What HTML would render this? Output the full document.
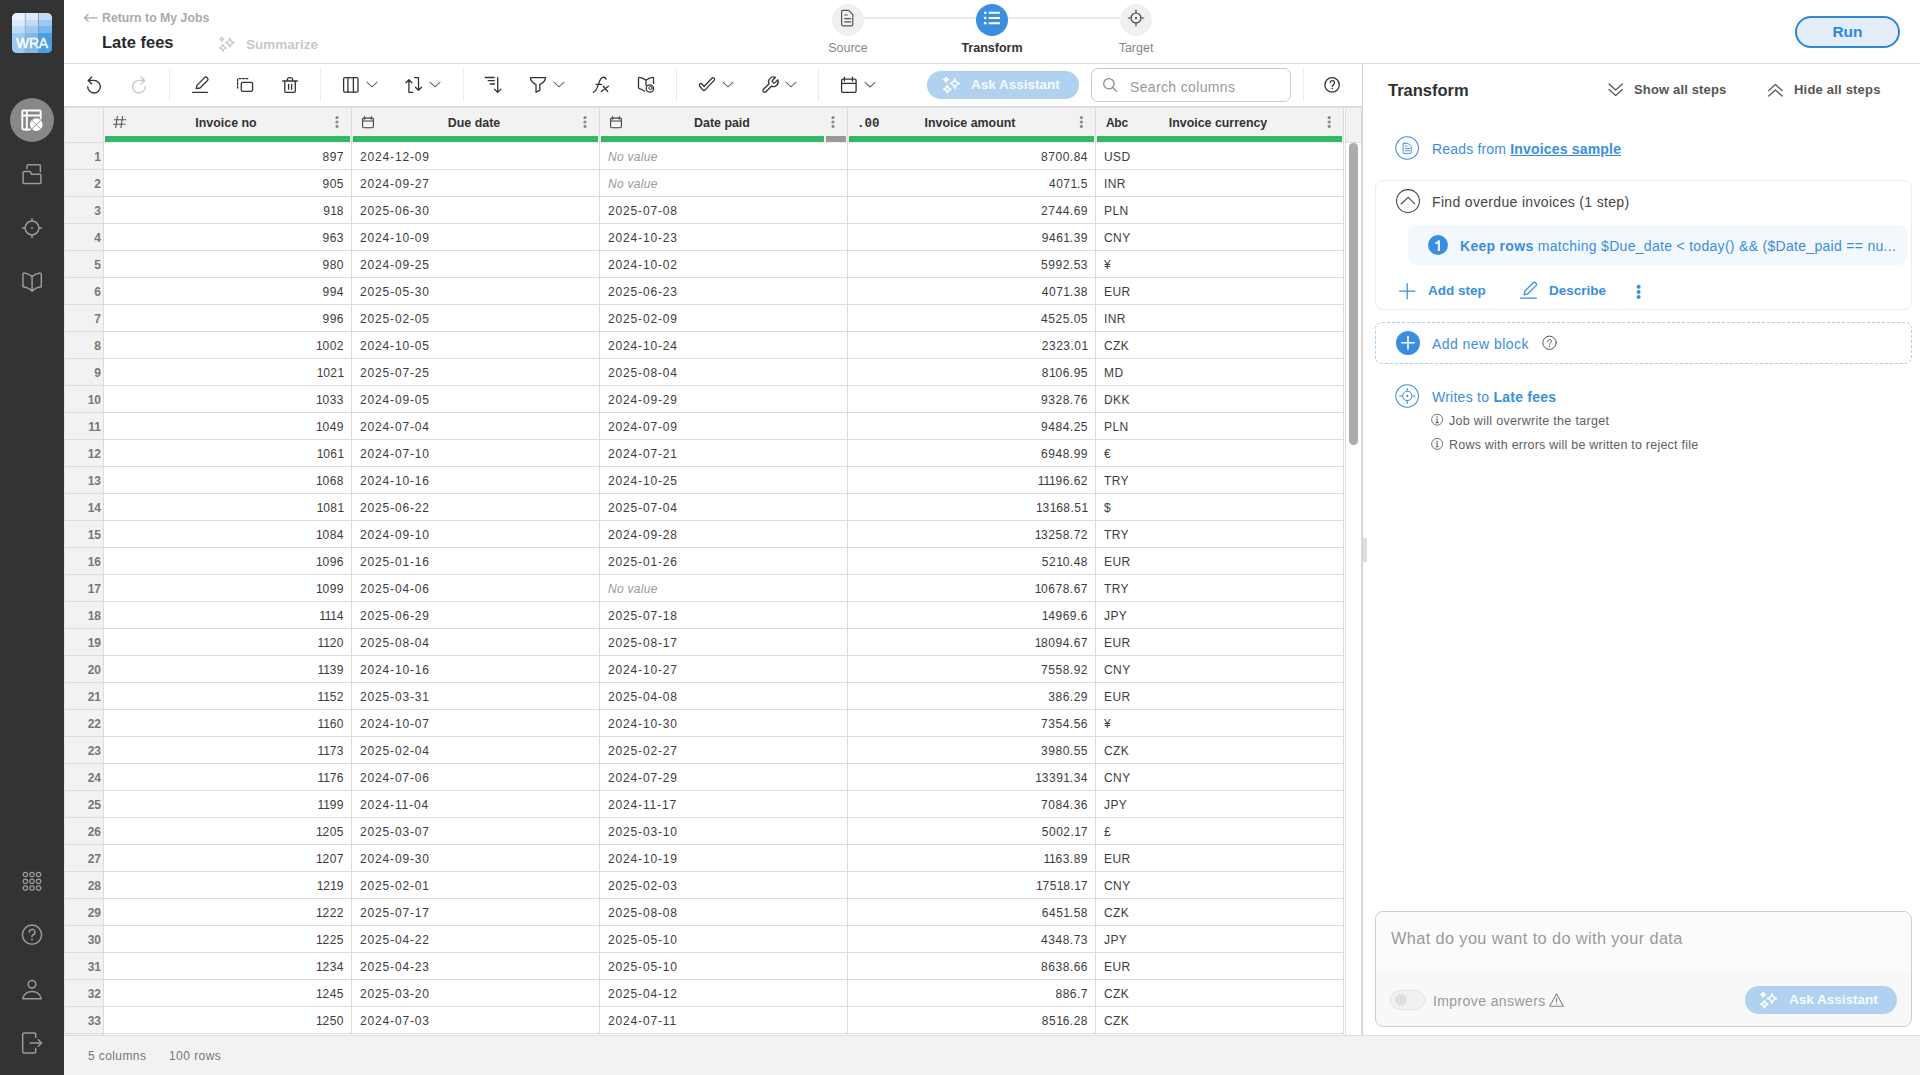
<!DOCTYPE html>
<html><head><meta charset="utf-8">
<style>
*{box-sizing:border-box;margin:0;padding:0}
html,body{width:1920px;height:1075px;overflow:hidden;background:#fff;font-family:"Liberation Sans",sans-serif;color:#333}
.abs{position:absolute}
svg{position:absolute;overflow:visible}
#side{position:absolute;left:0;top:0;width:64px;height:1075px;background:#333}
#hdr{position:absolute;left:64px;top:0;width:1856px;height:64px;background:#fff;border-bottom:1px solid #dcdcdc}
#tb{position:absolute;left:64px;top:64px;width:1298px;height:42px;background:#fff}
.sep{position:absolute;top:69px;width:1px;height:32px;background:#ebebeb}
#tbl{position:absolute;left:64px;top:106px;width:1298px;height:929px;background:#fff;border-top:2px solid #dcdcdc;overflow:hidden}
.rn{position:absolute;left:64px;width:40px;height:27px;background:#f2f2f2;border-right:1px solid #dcdcdc;border-bottom:1px solid #dcdcdc;border-left:1px solid #e4e4e4}
.rn span{position:absolute;right:2px;top:0;line-height:29px;font-size:12px;font-weight:bold;color:#777}
.c{position:absolute;width:248px;height:27px;border-right:1px solid #dcdcdc;border-bottom:1px solid #dcdcdc;line-height:29px;font-size:12px;color:#3c3c3c;white-space:nowrap;letter-spacing:0.85px}
.num{text-align:right;padding-right:7px;letter-spacing:0.5px}
.o{font-style:normal;letter-spacing:-0.2px}
.txt{padding-left:8px}
.nv{font-style:italic;color:#999;letter-spacing:0.3px}
.cur{letter-spacing:0.4px}
.hc{position:absolute;top:108px;height:35px;background:#f2f2f2;border-right:1px solid #dcdcdc}
.hc .t{position:absolute;left:-3px;right:0;top:1px;line-height:28px;text-align:center;font-size:12.4px;font-weight:bold;color:#333;letter-spacing:0px}
.hc .g{position:absolute;top:28px;height:6px;background:#35b865}
.kb{position:absolute;top:10px;width:3px}
.kb i{display:block;width:3px;height:3px;border-radius:50%;background:#8a8a8a;margin-bottom:1.5px}
#rp{position:absolute;left:1362px;top:64px;width:558px;height:971px;background:#fff;border-left:1px solid #d2d2d2}
#foot{position:absolute;left:64px;top:1035px;width:1856px;height:40px;background:#f2f2f2;border-top:1px solid #dcdcdc}
.blue{color:#3a8ee0}
</style></head><body>

<!-- SIDEBAR -->
<div id="side"></div>
<div class="abs" style="left:12px;top:13px;width:40px;height:40px;border-radius:5px;overflow:hidden;background:#8fc2ee">
  <svg width="40" height="40" style="left:0;top:0">
    <rect x="0" y="0" width="13" height="7" fill="#eaf3fc"/><rect x="13" y="0" width="13" height="7" fill="#dcebf9"/><rect x="26" y="0" width="14" height="7" fill="#bfdcf5"/>
    <rect x="0" y="7" width="13" height="6" fill="#dcebf9"/><rect x="13" y="7" width="13" height="6" fill="#bfdcf5"/><rect x="26" y="7" width="14" height="6" fill="#9ccaf0"/>
    <rect x="0" y="13" width="13" height="7" fill="#bfdcf5"/><rect x="13" y="13" width="13" height="7" fill="#9ccaf0"/><rect x="26" y="13" width="14" height="7" fill="#7cb8ea"/>
    <rect x="0" y="20" width="13" height="20" fill="#9ccaf0"/><rect x="13" y="20" width="13" height="20" fill="#7cb8ea"/><rect x="26" y="20" width="14" height="20" fill="#4a9fe2"/>
    <line x1="13.3" y1="0" x2="13.3" y2="40" stroke="#8ea3b6" stroke-width="0.9" opacity="0.85"/>
    <line x1="26.5" y1="0" x2="26.5" y2="40" stroke="#7d93a8" stroke-width="0.9" opacity="0.85"/>
    <text x="19.9" y="35.2" text-anchor="middle" font-family="Liberation Sans" font-size="13.9" fill="#fff" stroke="#fff" stroke-width="0.35" letter-spacing="-0.2">WRA</text>
  </svg>
</div>
<div class="abs" style="left:10px;top:98px;width:44px;height:44px;border-radius:50%;background:#878787"></div>

<!-- HEADER -->
<div id="hdr"></div>
<div class="abs" style="left:102px;top:10px;font-size:12.3px;font-weight:bold;color:#aaa;line-height:16px">Return to My Jobs</div>
<div class="abs" style="left:102px;top:32px;font-size:16.5px;font-weight:bold;color:#2a2a2a;line-height:20px">Late fees</div>
<div class="abs" style="left:246px;top:37px;font-size:13.5px;font-weight:bold;color:#c8c8c8;line-height:16px">Summarize</div>

<!-- stepper -->
<div class="abs" style="left:864px;top:17px;width:112px;height:2px;background:#ebebeb"></div>
<div class="abs" style="left:1008px;top:17px;width:112px;height:2px;background:#ebebeb"></div>
<div class="abs" style="left:832px;top:4px;width:32px;height:32px;border-radius:50%;background:#f0f0f0"></div>
<div class="abs" style="left:976px;top:4px;width:32px;height:32px;border-radius:50%;background:#3b8fdf"></div>
<div class="abs" style="left:1120px;top:4px;width:32px;height:32px;border-radius:50%;background:#f0f0f0"></div>
<div class="abs" style="left:798px;top:40px;width:100px;text-align:center;font-size:12.5px;color:#888;line-height:16px">Source</div>
<div class="abs" style="left:942px;top:40px;width:100px;text-align:center;font-size:12.5px;font-weight:bold;color:#333;line-height:16px">Transform</div>
<div class="abs" style="left:1086px;top:40px;width:100px;text-align:center;font-size:12.5px;color:#888;line-height:16px">Target</div>

<div class="abs" style="left:1795px;top:16px;width:105px;height:32px;border-radius:16px;border:2px solid #2e86d9;background:#e3eefa;text-align:center;line-height:28px;font-size:15.5px;font-weight:bold;color:#2e86d9">Run</div>

<!-- TOOLBAR -->
<div id="tb"></div>
<div class="sep" style="left:169px"></div>
<div class="sep" style="left:320px"></div>
<div class="sep" style="left:463px"></div>
<div class="sep" style="left:676px"></div>
<div class="sep" style="left:818px"></div>
<div class="sep" style="left:1303px"></div>
<div class="abs" style="left:927px;top:71px;width:152px;height:28px;border-radius:14px;background:#b0d1f0"></div>
<div class="abs" style="left:971px;top:77px;font-size:13.5px;font-weight:bold;color:#f7fafd;line-height:16px">Ask Assistant</div>
<div class="abs" style="left:1091px;top:68px;width:200px;height:34px;border:1px solid #c8c8c8;border-radius:7px;background:#fff"></div>
<div class="abs" style="left:1130px;top:79px;font-size:14px;letter-spacing:0.35px;color:#999;line-height:16px">Search columns</div>

<!-- TABLE -->
<div id="tbl"></div>
<div class="abs" style="left:64px;top:108px;width:40px;height:35px;background:#f2f2f2;border-right:1px solid #dcdcdc;border-bottom:1px solid #dcdcdc;border-left:1px solid #e4e4e4"></div>
<div class="hc" style="left:104px;width:248px">
  <div class="t">Invoice no</div>
  <div class="g" style="left:1px;width:245px"></div>
</div>
<div class="hc" style="left:352px;width:248px">
  <div class="t">Due date</div>
  <div class="g" style="left:1px;width:245px"></div>
</div>
<div class="hc" style="left:600px;width:248px">
  <div class="t">Date paid</div>
  <div class="g" style="left:1px;width:223px"></div>
  <div class="g" style="left:226px;width:20px;background:#999"></div>
</div>
<div class="hc" style="left:848px;width:248px">
  <div class="abs" style="left:9px;top:8px;font-family:'Liberation Mono',monospace;font-size:12.5px;font-weight:bold;color:#333;line-height:16px;letter-spacing:0px">.00</div>
  <div class="t">Invoice amount</div>
  <div class="g" style="left:1px;width:245px"></div>
</div>
<div class="hc" style="left:1096px;width:248px">
  <div class="abs" style="left:10px;top:7px;font-size:12px;letter-spacing:-0.3px;font-weight:bold;color:#333;line-height:16px">Abc</div>
  <div class="t">Invoice currency</div>
  <div class="g" style="left:1px;width:245px"></div>
</div>
<div class="rn" style="top:143px"><span>1</span></div>
<div class="c num" style="top:143px;left:104px">897</div>
<div class="c txt" style="top:143px;left:352px">2024-12-09</div>
<div class="c txt nv" style="top:143px;left:600px">No value</div>
<div class="c num" style="top:143px;left:848px">8700.84</div>
<div class="c txt cur" style="top:143px;left:1096px">USD</div>
<div class="rn" style="top:170px"><span>2</span></div>
<div class="c num" style="top:170px;left:104px">905</div>
<div class="c txt" style="top:170px;left:352px">2024-09-27</div>
<div class="c txt nv" style="top:170px;left:600px">No value</div>
<div class="c num" style="top:170px;left:848px">407<i class=o>1</i>.5</div>
<div class="c txt cur" style="top:170px;left:1096px">INR</div>
<div class="rn" style="top:197px"><span>3</span></div>
<div class="c num" style="top:197px;left:104px">9<i class=o>1</i>8</div>
<div class="c txt" style="top:197px;left:352px">2025-06-30</div>
<div class="c txt" style="top:197px;left:600px">2025-07-08</div>
<div class="c num" style="top:197px;left:848px">2744.69</div>
<div class="c txt cur" style="top:197px;left:1096px">PLN</div>
<div class="rn" style="top:224px"><span>4</span></div>
<div class="c num" style="top:224px;left:104px">963</div>
<div class="c txt" style="top:224px;left:352px">2024-10-09</div>
<div class="c txt" style="top:224px;left:600px">2024-10-23</div>
<div class="c num" style="top:224px;left:848px">946<i class=o>1</i>.39</div>
<div class="c txt cur" style="top:224px;left:1096px">CNY</div>
<div class="rn" style="top:251px"><span>5</span></div>
<div class="c num" style="top:251px;left:104px">980</div>
<div class="c txt" style="top:251px;left:352px">2024-09-25</div>
<div class="c txt" style="top:251px;left:600px">2024-10-02</div>
<div class="c num" style="top:251px;left:848px">5992.53</div>
<div class="c txt cur" style="top:251px;left:1096px">¥</div>
<div class="rn" style="top:278px"><span>6</span></div>
<div class="c num" style="top:278px;left:104px">994</div>
<div class="c txt" style="top:278px;left:352px">2025-05-30</div>
<div class="c txt" style="top:278px;left:600px">2025-06-23</div>
<div class="c num" style="top:278px;left:848px">407<i class=o>1</i>.38</div>
<div class="c txt cur" style="top:278px;left:1096px">EUR</div>
<div class="rn" style="top:305px"><span>7</span></div>
<div class="c num" style="top:305px;left:104px">996</div>
<div class="c txt" style="top:305px;left:352px">2025-02-05</div>
<div class="c txt" style="top:305px;left:600px">2025-02-09</div>
<div class="c num" style="top:305px;left:848px">4525.05</div>
<div class="c txt cur" style="top:305px;left:1096px">INR</div>
<div class="rn" style="top:332px"><span>8</span></div>
<div class="c num" style="top:332px;left:104px"><i class=o>1</i>002</div>
<div class="c txt" style="top:332px;left:352px">2024-10-05</div>
<div class="c txt" style="top:332px;left:600px">2024-10-24</div>
<div class="c num" style="top:332px;left:848px">2323.0<i class=o>1</i></div>
<div class="c txt cur" style="top:332px;left:1096px">CZK</div>
<div class="rn" style="top:359px"><span>9</span></div>
<div class="c num" style="top:359px;left:104px"><i class=o>1</i>02<i class=o>1</i></div>
<div class="c txt" style="top:359px;left:352px">2025-07-25</div>
<div class="c txt" style="top:359px;left:600px">2025-08-04</div>
<div class="c num" style="top:359px;left:848px">8<i class=o>1</i>06.95</div>
<div class="c txt cur" style="top:359px;left:1096px">MD</div>
<div class="rn" style="top:386px"><span>10</span></div>
<div class="c num" style="top:386px;left:104px"><i class=o>1</i>033</div>
<div class="c txt" style="top:386px;left:352px">2024-09-05</div>
<div class="c txt" style="top:386px;left:600px">2024-09-29</div>
<div class="c num" style="top:386px;left:848px">9328.76</div>
<div class="c txt cur" style="top:386px;left:1096px">DKK</div>
<div class="rn" style="top:413px"><span>11</span></div>
<div class="c num" style="top:413px;left:104px"><i class=o>1</i>049</div>
<div class="c txt" style="top:413px;left:352px">2024-07-04</div>
<div class="c txt" style="top:413px;left:600px">2024-07-09</div>
<div class="c num" style="top:413px;left:848px">9484.25</div>
<div class="c txt cur" style="top:413px;left:1096px">PLN</div>
<div class="rn" style="top:440px"><span>12</span></div>
<div class="c num" style="top:440px;left:104px"><i class=o>1</i>06<i class=o>1</i></div>
<div class="c txt" style="top:440px;left:352px">2024-07-10</div>
<div class="c txt" style="top:440px;left:600px">2024-07-21</div>
<div class="c num" style="top:440px;left:848px">6948.99</div>
<div class="c txt cur" style="top:440px;left:1096px">€</div>
<div class="rn" style="top:467px"><span>13</span></div>
<div class="c num" style="top:467px;left:104px"><i class=o>1</i>068</div>
<div class="c txt" style="top:467px;left:352px">2024-10-16</div>
<div class="c txt" style="top:467px;left:600px">2024-10-25</div>
<div class="c num" style="top:467px;left:848px"><i class=o>1</i><i class=o>1</i><i class=o>1</i>96.62</div>
<div class="c txt cur" style="top:467px;left:1096px">TRY</div>
<div class="rn" style="top:494px"><span>14</span></div>
<div class="c num" style="top:494px;left:104px"><i class=o>1</i>08<i class=o>1</i></div>
<div class="c txt" style="top:494px;left:352px">2025-06-22</div>
<div class="c txt" style="top:494px;left:600px">2025-07-04</div>
<div class="c num" style="top:494px;left:848px"><i class=o>1</i>3<i class=o>1</i>68.5<i class=o>1</i></div>
<div class="c txt cur" style="top:494px;left:1096px">$</div>
<div class="rn" style="top:521px"><span>15</span></div>
<div class="c num" style="top:521px;left:104px"><i class=o>1</i>084</div>
<div class="c txt" style="top:521px;left:352px">2024-09-10</div>
<div class="c txt" style="top:521px;left:600px">2024-09-28</div>
<div class="c num" style="top:521px;left:848px"><i class=o>1</i>3258.72</div>
<div class="c txt cur" style="top:521px;left:1096px">TRY</div>
<div class="rn" style="top:548px"><span>16</span></div>
<div class="c num" style="top:548px;left:104px"><i class=o>1</i>096</div>
<div class="c txt" style="top:548px;left:352px">2025-01-16</div>
<div class="c txt" style="top:548px;left:600px">2025-01-26</div>
<div class="c num" style="top:548px;left:848px">52<i class=o>1</i>0.48</div>
<div class="c txt cur" style="top:548px;left:1096px">EUR</div>
<div class="rn" style="top:575px"><span>17</span></div>
<div class="c num" style="top:575px;left:104px"><i class=o>1</i>099</div>
<div class="c txt" style="top:575px;left:352px">2025-04-06</div>
<div class="c txt nv" style="top:575px;left:600px">No value</div>
<div class="c num" style="top:575px;left:848px"><i class=o>1</i>0678.67</div>
<div class="c txt cur" style="top:575px;left:1096px">TRY</div>
<div class="rn" style="top:602px"><span>18</span></div>
<div class="c num" style="top:602px;left:104px"><i class=o>1</i><i class=o>1</i><i class=o>1</i>4</div>
<div class="c txt" style="top:602px;left:352px">2025-06-29</div>
<div class="c txt" style="top:602px;left:600px">2025-07-18</div>
<div class="c num" style="top:602px;left:848px"><i class=o>1</i>4969.6</div>
<div class="c txt cur" style="top:602px;left:1096px">JPY</div>
<div class="rn" style="top:629px"><span>19</span></div>
<div class="c num" style="top:629px;left:104px"><i class=o>1</i><i class=o>1</i>20</div>
<div class="c txt" style="top:629px;left:352px">2025-08-04</div>
<div class="c txt" style="top:629px;left:600px">2025-08-17</div>
<div class="c num" style="top:629px;left:848px"><i class=o>1</i>8094.67</div>
<div class="c txt cur" style="top:629px;left:1096px">EUR</div>
<div class="rn" style="top:656px"><span>20</span></div>
<div class="c num" style="top:656px;left:104px"><i class=o>1</i><i class=o>1</i>39</div>
<div class="c txt" style="top:656px;left:352px">2024-10-16</div>
<div class="c txt" style="top:656px;left:600px">2024-10-27</div>
<div class="c num" style="top:656px;left:848px">7558.92</div>
<div class="c txt cur" style="top:656px;left:1096px">CNY</div>
<div class="rn" style="top:683px"><span>21</span></div>
<div class="c num" style="top:683px;left:104px"><i class=o>1</i><i class=o>1</i>52</div>
<div class="c txt" style="top:683px;left:352px">2025-03-31</div>
<div class="c txt" style="top:683px;left:600px">2025-04-08</div>
<div class="c num" style="top:683px;left:848px">386.29</div>
<div class="c txt cur" style="top:683px;left:1096px">EUR</div>
<div class="rn" style="top:710px"><span>22</span></div>
<div class="c num" style="top:710px;left:104px"><i class=o>1</i><i class=o>1</i>60</div>
<div class="c txt" style="top:710px;left:352px">2024-10-07</div>
<div class="c txt" style="top:710px;left:600px">2024-10-30</div>
<div class="c num" style="top:710px;left:848px">7354.56</div>
<div class="c txt cur" style="top:710px;left:1096px">¥</div>
<div class="rn" style="top:737px"><span>23</span></div>
<div class="c num" style="top:737px;left:104px"><i class=o>1</i><i class=o>1</i>73</div>
<div class="c txt" style="top:737px;left:352px">2025-02-04</div>
<div class="c txt" style="top:737px;left:600px">2025-02-27</div>
<div class="c num" style="top:737px;left:848px">3980.55</div>
<div class="c txt cur" style="top:737px;left:1096px">CZK</div>
<div class="rn" style="top:764px"><span>24</span></div>
<div class="c num" style="top:764px;left:104px"><i class=o>1</i><i class=o>1</i>76</div>
<div class="c txt" style="top:764px;left:352px">2024-07-06</div>
<div class="c txt" style="top:764px;left:600px">2024-07-29</div>
<div class="c num" style="top:764px;left:848px"><i class=o>1</i>339<i class=o>1</i>.34</div>
<div class="c txt cur" style="top:764px;left:1096px">CNY</div>
<div class="rn" style="top:791px"><span>25</span></div>
<div class="c num" style="top:791px;left:104px"><i class=o>1</i><i class=o>1</i>99</div>
<div class="c txt" style="top:791px;left:352px">2024-11-04</div>
<div class="c txt" style="top:791px;left:600px">2024-11-17</div>
<div class="c num" style="top:791px;left:848px">7084.36</div>
<div class="c txt cur" style="top:791px;left:1096px">JPY</div>
<div class="rn" style="top:818px"><span>26</span></div>
<div class="c num" style="top:818px;left:104px"><i class=o>1</i>205</div>
<div class="c txt" style="top:818px;left:352px">2025-03-07</div>
<div class="c txt" style="top:818px;left:600px">2025-03-10</div>
<div class="c num" style="top:818px;left:848px">5002.<i class=o>1</i>7</div>
<div class="c txt cur" style="top:818px;left:1096px">£</div>
<div class="rn" style="top:845px"><span>27</span></div>
<div class="c num" style="top:845px;left:104px"><i class=o>1</i>207</div>
<div class="c txt" style="top:845px;left:352px">2024-09-30</div>
<div class="c txt" style="top:845px;left:600px">2024-10-19</div>
<div class="c num" style="top:845px;left:848px"><i class=o>1</i><i class=o>1</i>63.89</div>
<div class="c txt cur" style="top:845px;left:1096px">EUR</div>
<div class="rn" style="top:872px"><span>28</span></div>
<div class="c num" style="top:872px;left:104px"><i class=o>1</i>2<i class=o>1</i>9</div>
<div class="c txt" style="top:872px;left:352px">2025-02-01</div>
<div class="c txt" style="top:872px;left:600px">2025-02-03</div>
<div class="c num" style="top:872px;left:848px"><i class=o>1</i>75<i class=o>1</i>8.<i class=o>1</i>7</div>
<div class="c txt cur" style="top:872px;left:1096px">CNY</div>
<div class="rn" style="top:899px"><span>29</span></div>
<div class="c num" style="top:899px;left:104px"><i class=o>1</i>222</div>
<div class="c txt" style="top:899px;left:352px">2025-07-17</div>
<div class="c txt" style="top:899px;left:600px">2025-08-08</div>
<div class="c num" style="top:899px;left:848px">645<i class=o>1</i>.58</div>
<div class="c txt cur" style="top:899px;left:1096px">CZK</div>
<div class="rn" style="top:926px"><span>30</span></div>
<div class="c num" style="top:926px;left:104px"><i class=o>1</i>225</div>
<div class="c txt" style="top:926px;left:352px">2025-04-22</div>
<div class="c txt" style="top:926px;left:600px">2025-05-10</div>
<div class="c num" style="top:926px;left:848px">4348.73</div>
<div class="c txt cur" style="top:926px;left:1096px">JPY</div>
<div class="rn" style="top:953px"><span>31</span></div>
<div class="c num" style="top:953px;left:104px"><i class=o>1</i>234</div>
<div class="c txt" style="top:953px;left:352px">2025-04-23</div>
<div class="c txt" style="top:953px;left:600px">2025-05-10</div>
<div class="c num" style="top:953px;left:848px">8638.66</div>
<div class="c txt cur" style="top:953px;left:1096px">EUR</div>
<div class="rn" style="top:980px"><span>32</span></div>
<div class="c num" style="top:980px;left:104px"><i class=o>1</i>245</div>
<div class="c txt" style="top:980px;left:352px">2025-03-20</div>
<div class="c txt" style="top:980px;left:600px">2025-04-12</div>
<div class="c num" style="top:980px;left:848px">886.7</div>
<div class="c txt cur" style="top:980px;left:1096px">CZK</div>
<div class="rn" style="top:1007px"><span>33</span></div>
<div class="c num" style="top:1007px;left:104px"><i class=o>1</i>250</div>
<div class="c txt" style="top:1007px;left:352px">2024-07-03</div>
<div class="c txt" style="top:1007px;left:600px">2024-07-11</div>
<div class="c num" style="top:1007px;left:848px">85<i class=o>1</i>6.28</div>
<div class="c txt cur" style="top:1007px;left:1096px">CZK</div>
<div class="rn" style="top:1034px"></div>
<!-- scroll col -->
<div class="abs" style="left:1345px;top:108px;width:17px;height:927px;background:#fff;border-left:1px solid #dcdcdc;border-right:1px solid #dcdcdc"></div>
<div class="abs" style="left:1346px;top:108px;width:15px;height:35px;background:#f2f2f2;border-bottom:1px solid #dcdcdc"></div>
<div class="abs" style="left:1349px;top:143px;width:9px;height:302px;border-radius:4.5px;background:#acacac"></div>

<!-- RIGHT PANEL -->
<div id="rp"></div>
<div class="abs" style="left:1363px;top:538px;width:4px;height:24px;background:#dedede"></div>
<div class="abs" style="left:1388px;top:80px;font-size:16.5px;font-weight:bold;color:#2f2f2f;line-height:20px">Transform</div>
<div class="abs" style="left:1634px;top:82px;font-size:13px;letter-spacing:0.15px;font-weight:bold;color:#555;line-height:16px">Show all steps</div>
<div class="abs" style="left:1794px;top:82px;font-size:13px;letter-spacing:0.2px;font-weight:bold;color:#555;line-height:16px">Hide all steps</div>
<div class="abs blue" style="left:1432px;top:140px;font-size:14px;letter-spacing:0.18px;line-height:18px">Reads from <b style="text-decoration:underline">Invoices sample</b></div>

<div class="abs" style="left:1375px;top:180px;width:537px;height:130px;border:1px solid #ececec;border-radius:8px"></div>
<div class="abs" style="left:1432px;top:193px;font-size:14px;letter-spacing:0.33px;color:#444;line-height:18px">Find overdue invoices (1 step)</div>
<div class="abs" style="left:1408px;top:225px;width:499px;height:40px;border-radius:8px;background:#f3f8fd"></div>
<div class="abs" style="left:1428px;top:235px;width:20px;height:20px;border-radius:50%;background:#3a8ee0"></div>
<div class="abs blue" style="left:1460px;top:237px;font-size:14px;letter-spacing:0.3px;line-height:18px;white-space:nowrap"><b>Keep rows</b> matching $Due_date &lt; today() &amp;&amp; ($Date_paid == nu...</div>
<div class="abs blue" style="left:1428px;top:283px;font-size:13.5px;font-weight:bold;line-height:16px">Add step</div>
<div class="abs blue" style="left:1549px;top:283px;font-size:13.5px;font-weight:bold;line-height:16px">Describe</div>

<div class="abs" style="left:1375px;top:322px;width:537px;height:42px;border:1px dashed #a8cff0;border-radius:7px"></div>
<div class="abs" style="left:1396px;top:331px;width:24px;height:24px;border-radius:50%;background:#3a8ee0"></div>
<div class="abs blue" style="left:1432px;top:335px;font-size:14px;letter-spacing:0.45px;line-height:18px">Add new block</div>
<div class="abs blue" style="left:1432px;top:388px;font-size:14px;letter-spacing:0.25px;line-height:18px">Writes to <b>Late fees</b></div>
<div class="abs" style="left:1449px;top:413px;font-size:12.5px;letter-spacing:0.3px;color:#606060;line-height:16px">Job will overwrite the target</div>
<div class="abs" style="left:1449px;top:437px;font-size:12.5px;letter-spacing:0.22px;color:#606060;line-height:16px">Rows with errors will be written to reject file</div>

<div class="abs" style="left:1375px;top:911px;width:537px;height:116px;border:1px solid #cfcfcf;border-radius:8px;background:#f8f8f8"></div>
<div class="abs" style="left:1376px;top:912px;width:535px;height:61px;border-radius:7px 7px 8px 8px;background:#fbfbfb"></div>
<div class="abs" style="left:1391px;top:928px;font-size:16.3px;letter-spacing:0.4px;color:#999;line-height:20px">What do you want to do with your data</div>
<div class="abs" style="left:1390px;top:990px;width:35px;height:20px;border-radius:10px;background:#f1f1f1;border:1px solid #e4e4e4"></div>
<div class="abs" style="left:1395px;top:994px;width:12px;height:12px;border-radius:50%;background:#dedede"></div>
<div class="abs" style="left:1433px;top:992px;font-size:14px;letter-spacing:0.4px;color:#999;line-height:18px">Improve answers</div>
<div class="abs" style="left:1745px;top:986px;width:152px;height:28px;border-radius:14px;background:#b0d1f0"></div>
<div class="abs" style="left:1789px;top:992px;font-size:13.5px;font-weight:bold;color:#f7fafd;line-height:16px">Ask Assistant</div>

<!-- FOOTER -->
<div id="foot"></div>
<div class="abs" style="left:88px;top:1048px;font-size:12px;letter-spacing:0.4px;color:#777;line-height:16px">5 columns</div>
<div class="abs" style="left:169px;top:1048px;font-size:12px;letter-spacing:0.45px;color:#777;line-height:16px">100 rows</div>

<!-- ICON OVERLAY -->
<svg width="1920" height="1075" style="left:0;top:0" fill="none" stroke-linecap="round" stroke-linejoin="round">


<!-- sidebar icons -->
<g stroke="#fff" stroke-width="1.9">
  <path d="M23.5 110.5h16a1.2 1.2 0 0 1 1.2 1.2v6.8M23.5 110.5a1.2 1.2 0 0 0 -1.2 1.2v16.6a1.2 1.2 0 0 0 1.2 1.2h6.5M22.3 115.5h18.4M26.8 111v19"/>
</g>
<circle cx="36.3" cy="124.6" r="6.3" fill="#fff"/>
<path d="M32.3 120.6l8 8M40.3 120.6l-8 8" stroke="#878787" stroke-width="0.9"/>
<g stroke="#9a9a9a" stroke-width="1.5">
  <path d="M27 168.6v-2.6a1.2 1.2 0 0 1 1.2 -1.2h11a1.2 1.2 0 0 1 1.2 1.2v5.7"/>
  <path d="M23.1 172.7a1.2 1.2 0 0 1 1.2 -1.2h5.9l1.3 2.7h8.2a1.2 1.2 0 0 1 1.2 1.2v7a1.2 1.2 0 0 1 -1.2 1.2h-15.4a1.2 1.2 0 0 1 -1.2 -1.2z"/>
  <circle cx="32" cy="228" r="6.9"/>
  <path d="M32 218.5v2.6M32 234.9v2.6M22.5 228h2.6M38.9 228h2.6"/>
  <path d="M32.1 276.3C30 274.6 27 273.3 24.2 272.9a1.2 1.2 0 0 0 -1.3 1.2v12.6C26 287 29.5 288.5 32.1 291.2C34.7 288.5 38.2 287 41.3 286.7v-12.6a1.2 1.2 0 0 0 -1.3 -1.2C37.2 273.3 34.2 274.6 32.1 276.3zM32.1 276.3v14.9"/>
</g>
<circle cx="32" cy="228" r="1" fill="#9a9a9a"/>
<g stroke="#9a9a9a" stroke-width="1.2">
  <circle cx="25.4" cy="874.5" r="2.2"/><circle cx="32" cy="874.5" r="2.2"/><circle cx="38.6" cy="874.5" r="2.2"/>
  <circle cx="25.4" cy="881.3" r="2.2"/><circle cx="32" cy="881.3" r="2.2"/><circle cx="38.6" cy="881.3" r="2.2"/>
  <circle cx="25.4" cy="888.1" r="2.2"/><circle cx="32" cy="888.1" r="2.2"/><circle cx="38.6" cy="888.1" r="2.2"/>
</g>
<g stroke="#9a9a9a" stroke-width="1.5">
  <circle cx="32" cy="934.7" r="9.6"/>
  <path d="M29.3 932.2a2.8 2.8 0 1 1 4 2.5c-.8.4-1.3 1-1.3 1.8v.5"/>
  <circle cx="32" cy="984.2" r="3.8"/>
  <path d="M22.8 998.8c.8-4.5 4.5-7.3 9.2-7.3s8.4 2.8 9.2 7.3z"/>
  <path d="M35.7 1037.5v-3.3a1.2 1.2 0 0 0 -1.2 -1.2h-10.6a1.2 1.2 0 0 0 -1.2 1.2v17.6a1.2 1.2 0 0 0 1.2 1.2h10.6a1.2 1.2 0 0 0 1.2 -1.2v-3.3M30.2 1043h11.3M38.3 1039.8l3.2 3.2-3.2 3.2"/>
</g>
<circle cx="32" cy="939.6" r="0.9" fill="#9a9a9a"/>

<!-- header icons -->
<path d="M88.2 14.3L84.6 17.8L88.2 21.3M84.8 17.8H97.4" stroke="#aaa" stroke-width="1.2"/>
<g transform="translate(219,36.6)" stroke="#c8c8c8" stroke-width="1.3"><g>
    <path d="M2.75 0.5Q3.2 2.15 4.85 2.6Q3.2 3.05 2.75 4.7Q2.3 3.05 0.65 2.6Q2.3 2.15 2.75 0.5Z"/>
    <path d="M10.9 1.7Q11.65 5.25 15.2 6Q11.65 6.75 10.9 10.3Q10.15 6.75 6.6 6Q10.15 5.25 10.9 1.7Z"/>
    <path d="M3.9 8Q4.5 10.7 7.2 11.3Q4.5 11.9 3.9 14.6Q3.3 11.9 0.6 11.3Q3.3 10.7 3.9 8Z"/>
  </g></g>
<!-- stepper icons -->
<g stroke="#555" stroke-width="1.2">
  <path d="M842.9 10.4h5.8l4.1 4.2v9.9a1.3 1.3 0 0 1 -1.3 1.3h-8.6a1.3 1.3 0 0 1 -1.3 -1.3v-12.8a1.3 1.3 0 0 1 1.3 -1.3zM844.8 15h2.5M844.8 18.6h5.8M844.8 21.9h5.8"/>
</g>
<g fill="#fff" stroke="none"><circle cx="985.2" cy="12.8" r="1.35"/><circle cx="985.2" cy="18" r="1.35"/><circle cx="985.2" cy="23.2" r="1.35"/></g>
<path d="M988.7 12.8h11.3M988.7 18h11.3M988.7 23.2h11.3" stroke="#fff" stroke-width="1.9" stroke-linecap="butt"/>
<g stroke="#444" stroke-width="1.2">
  <circle cx="1136" cy="18" r="5"/>
  <path d="M1136 10.2v2.6M1136 23.2v2.6M1128.2 18h2.6M1141.2 18h2.6"/>
</g>
<circle cx="1136" cy="18" r="1.1" fill="#444"/>

<!-- toolbar icons -->
<g stroke="#333" stroke-width="1.35">
  <path d="M91.7 77.1L88.2 80.4L91.7 83.7M88.4 80.4H94A6.3 6.3 0 1 1 87.7 86.6"/>
</g>
<g stroke="#c8c8c8" stroke-width="1.35">
  <path d="M141.2 77.1L144.7 80.4L141.2 83.7M144.5 80.4H138.9A6.3 6.3 0 1 0 145.2 86.6"/>
</g>
<g stroke="#333" stroke-width="1.3">
  <path d="M192.6 92.4H207.6"/>
  <path d="M196.2 88.7L197.1 85.1L204.6 77.6Q205.8 76.5 207 77.6L207.5 78.1Q208.6 79.3 207.5 80.5L200 88Z"/>
  <rect x="241.3" y="82.3" width="11.3" height="9" rx="1.4"/>
  <path d="M237.6 88V79.8Q237.6 78.6 238.8 78.6H249.3" stroke-dasharray="1.9 1.5"/>
  <path d="M282.7 81H297.3M287.4 80.8V79.6Q287.4 77.6 290 77.6Q292.6 77.6 292.6 79.6V80.8M284.8 81.2V91Q284.8 92.3 286.1 92.3H294Q295.3 92.3 295.3 91V81.2M288.6 84.3V89.2M291.6 84.3V89.2"/>
  <rect x="343.6" y="77.7" width="14.4" height="14.5" rx="1.4"/>
  <path d="M347.9 77.7V92.2M353.4 77.7V92.2"/>
  <path d="M408.9 79.9V92.3H412.8M405.9 82.8L408.9 79.8L411.9 82.8M418.5 90.2V77.6H414.6M415.4 87.2L418.5 90.2L421.6 87.2"/>
  <path d="M485.2 77.5H494.1M488.2 80.7H494.3M490.3 84H494.5M497.7 77.3V92.4M494.6 89.3L497.7 92.4L500.8 89.3"/>
  <path d="M530.4 77.6H545.5C545.5 81.3 542.3 83.4 539.8 84.7V90.4L536 92.2V84.7C533.5 83.4 530.4 81.3 530.4 77.6Z"/>
  <path d="M593.3 92.3C596.5 91.2 597.3 87.5 598.5 84.2C599.6 81 600.3 78.2 602.6 77.4C604.1 76.9 605.4 77.7 606.2 79.1M596.1 84.3H601.5M603.2 86.3L607.7 91.5M608.5 86.3L601.2 91.5"/>
  <path d="M646 80.3C644.3 78.8 642 77.6 639.6 77.3Q638.5 77.2 638.5 78.3V87.5Q638.5 88.3 639.3 88.6C641.3 89.2 643.2 90 644.7 91.2M646 80.3C647.7 78.8 650 77.6 652.4 77.3Q653.5 77.2 653.5 78.3V83.4M646 80.3V85.5"/>
  <circle cx="649.9" cy="88.5" r="3.7"/>
  <circle cx="650.4" cy="88" r="1.6" stroke-width="1"/>
</g>
<path d="M700.9 85.2L704 88.8L713 79.3" stroke="#333" stroke-width="4.4"/>
<path d="M700.9 85.2L704 88.8L713 79.3" stroke="#fff" stroke-width="1.8"/>
<g transform="translate(760.6,75.4) scale(0.8)">
<path d="M14.7 6.3a1 1 0 0 0 0 1.4l1.6 1.6a1 1 0 0 0 1.4 0l3.77-3.77a6 6 0 0 1-7.94 7.94l-6.91 6.91a2.12 2.12 0 0 1-3-3l6.91-6.91a6 6 0 0 1 7.94-7.94l-3.76 3.76z" stroke="#333" stroke-width="1.6"/>
</g>
<g stroke="#333" stroke-width="1.3">
  <path d="M843.2 79.2h-0.3a1.3 1.3 0 0 0 -1.3 1.3v10.5a1.3 1.3 0 0 0 1.3 1.3h11.9a1.3 1.3 0 0 0 1.3 -1.3v-10.5a1.3 1.3 0 0 0 -1.3 -1.3h-1M841.6 83.3H856.1M844.4 77.1V81M852.5 77.1V81M844.8 79.2H851.8"/>
</g>
<g transform="translate(367,82.1)" ><g><path d="M0 0L5 4.7L10 0" stroke="#666" stroke-width="1.05"/></g></g>
<g transform="translate(430,82.1)" ><g><path d="M0 0L5 4.7L10 0" stroke="#666" stroke-width="1.05"/></g></g>
<g transform="translate(554,82.1)" ><g><path d="M0 0L5 4.7L10 0" stroke="#666" stroke-width="1.05"/></g></g>
<g transform="translate(723,82.1)" ><g><path d="M0 0L5 4.7L10 0" stroke="#666" stroke-width="1.05"/></g></g>
<g transform="translate(786,82.1)" ><g><path d="M0 0L5 4.7L10 0" stroke="#666" stroke-width="1.05"/></g></g>
<g transform="translate(865,82.3)" ><g><path d="M0 0L5 4.7L10 0" stroke="#666" stroke-width="1.05"/></g></g>
<g transform="translate(-75.4,-6.2) scale(1.08) translate(943,77)" stroke="#fff" stroke-width="1.45"><g>
    <path d="M2.75 0.5Q3.2 2.15 4.85 2.6Q3.2 3.05 2.75 4.7Q2.3 3.05 0.65 2.6Q2.3 2.15 2.75 0.5Z"/>
    <path d="M10.9 1.7Q11.65 5.25 15.2 6Q11.65 6.75 10.9 10.3Q10.15 6.75 6.6 6Q10.15 5.25 10.9 1.7Z"/>
    <path d="M3.9 8Q4.5 10.7 7.2 11.3Q4.5 11.9 3.9 14.6Q3.3 11.9 0.6 11.3Q3.3 10.7 3.9 8Z"/>
  </g></g>
<g stroke="#888" stroke-width="1.25"><circle cx="1108.9" cy="83.7" r="5.2"/><path d="M1112.8 87.6L1116.5 91.3"/></g>
<g stroke="#333" stroke-width="1.25"><circle cx="1332.1" cy="84.9" r="7.2"/><path d="M1330.2 82.6C1330.4 81.4 1331.2 80.7 1332.3 80.7C1333.5 80.7 1334.5 81.6 1334.5 82.8C1334.5 84.6 1332.4 84.7 1332.4 86.4"/></g>
<circle cx="1332.3" cy="88.6" r="0.8" fill="#333"/>

<!-- table header icons -->
<path d="M117.4 116.4L115.7 127.6M122.6 116.4L120.9 127.6M114.3 119.8H125.8M113.6 124.2H125.1" stroke="#555" stroke-width="1.1"/>
<g transform="translate(362,116)" ><g stroke="#444" stroke-width="1.1">
    <path d="M2.1 2.1h-0.3a1.25 1.25 0 0 0 -1.25 1.25v7.1a1.25 1.25 0 0 0 1.25 1.25h8.4a1.25 1.25 0 0 0 1.25 -1.25v-7.1a1.25 1.25 0 0 0 -1.25 -1.25h-0.5M0.55 5h10.9M2.6 0.6v2.6M9.3 0.6v2.6M2.9 2.1h6.1"/>
  </g></g>
<g transform="translate(610,116)" ><g stroke="#444" stroke-width="1.1">
    <path d="M2.1 2.1h-0.3a1.25 1.25 0 0 0 -1.25 1.25v7.1a1.25 1.25 0 0 0 1.25 1.25h8.4a1.25 1.25 0 0 0 1.25 -1.25v-7.1a1.25 1.25 0 0 0 -1.25 -1.25h-0.5M0.55 5h10.9M2.6 0.6v2.6M9.3 0.6v2.6M2.9 2.1h6.1"/>
  </g></g>
<g transform="translate(337,117.6)" ><g fill="#8a8a8a" stroke="none"><circle cx="0" cy="0" r="1.6"/><circle cx="0" cy="4.4" r="1.6"/><circle cx="0" cy="8.8" r="1.6"/></g></g>
<g transform="translate(585,117.6)" ><g fill="#8a8a8a" stroke="none"><circle cx="0" cy="0" r="1.6"/><circle cx="0" cy="4.4" r="1.6"/><circle cx="0" cy="8.8" r="1.6"/></g></g>
<g transform="translate(833,117.6)" ><g fill="#8a8a8a" stroke="none"><circle cx="0" cy="0" r="1.6"/><circle cx="0" cy="4.4" r="1.6"/><circle cx="0" cy="8.8" r="1.6"/></g></g>
<g transform="translate(1081.4,117.6)" ><g fill="#8a8a8a" stroke="none"><circle cx="0" cy="0" r="1.6"/><circle cx="0" cy="4.4" r="1.6"/><circle cx="0" cy="8.8" r="1.6"/></g></g>
<g transform="translate(1329.2,117.6)" ><g fill="#8a8a8a" stroke="none"><circle cx="0" cy="0" r="1.6"/><circle cx="0" cy="4.4" r="1.6"/><circle cx="0" cy="8.8" r="1.6"/></g></g>

<!-- right panel icons -->
<path d="M1435.6 243.8L1438.9 241.2V250.9" stroke="#eef4fb" stroke-width="2.1" stroke-linecap="butt" stroke-linejoin="round"/>
<path d="M1609 84L1615.7 90L1622.4 84M1609 89.5L1615.7 95.5L1622.4 89.5" stroke="#555" stroke-width="1.2"/>
<path d="M1768.7 90.5L1775.4 84.5L1782.1 90.5M1768.7 96L1775.4 90L1782.1 96" stroke="#555" stroke-width="1.2"/>
<circle cx="1407.1" cy="148" r="11.3" stroke="#3a8ee0" stroke-width="1.05"/>
<path d="M1403.7 143.3h4.2l3.3 3.3v6.2a.6.6 0 0 1 -.6 .6h-6.9a.6.6 0 0 1 -.6 -.6v-8.9a.6.6 0 0 1 .6 -.6zM1405.3 146.2h1.6M1405.3 148.5h4.2M1405.3 150.7h4.2" stroke="#3a8ee0" stroke-width="0.95"/>
<circle cx="1408" cy="201" r="11.4" stroke="#444" stroke-width="1.05"/>
<path d="M1401 204L1408.2 197.3L1414.7 203.9" stroke="#444" stroke-width="1.05"/>
<path d="M1407.2 283.6V298.8M1399.5 291.1H1414.8" stroke="#3a8ee0" stroke-width="1.25"/>
<path d="M1520.6 298.2H1536.4M1524 294.9L1525 291L1533.2 282.8Q1534.4 281.7 1535.6 282.8L1536 283.2Q1537.1 284.4 1536 285.6L1527.8 293.8Z" stroke="#3a8ee0" stroke-width="1.25"/>
<g fill="#3a8ee0" stroke="none"><circle cx="1638.6" cy="286.8" r="2"/><circle cx="1638.6" cy="291.9" r="2"/><circle cx="1638.6" cy="296.9" r="2"/></g>
<path d="M1408 336.5V349M1401.8 342.8H1414.2" stroke="#fff" stroke-width="1.6"/>
<g stroke="#555" stroke-width="1"><circle cx="1549.5" cy="342.8" r="6.7"/><path d="M1547.8 341.4C1547.8 340.3 1548.5 339.6 1549.6 339.6C1550.6 339.6 1551.4 340.3 1551.4 341.3C1551.4 342.8 1549.6 342.9 1549.6 344.3"/></g>
<circle cx="1549.6" cy="346.2" r="0.65" fill="#555"/>
<circle cx="1407.1" cy="396" r="11.3" stroke="#3a8ee0" stroke-width="1.05"/>
<g stroke="#3a8ee0" stroke-width="1.05"><circle cx="1407.3" cy="395.9" r="4.6"/><path d="M1407.3 388.4V390.6M1407.3 401.2V403.4M1399.6 395.9H1401.8M1412.8 395.9H1415"/></g>
<circle cx="1407.3" cy="395.9" r="1.1" fill="#3a8ee0"/>
<g transform="translate(1437.1,419.7)" ><g stroke="#666" stroke-width="0.9" stroke-linecap="butt"><circle cx="0" cy="0" r="5.5"/><path d="M0 -0.8V2.9M-1.6 2.9H1.6M-1.1 -0.8H0.5" stroke-width="1.05"/><circle cx="0" cy="-2.7" r="0.75" fill="#666" stroke="none"/></g></g>
<g transform="translate(1437.1,443.9)" ><g stroke="#666" stroke-width="0.9" stroke-linecap="butt"><circle cx="0" cy="0" r="5.5"/><path d="M0 -0.8V2.9M-1.6 2.9H1.6M-1.1 -0.8H0.5" stroke-width="1.05"/><circle cx="0" cy="-2.7" r="0.75" fill="#666" stroke="none"/></g></g>
<g stroke="#888" stroke-width="1.1"><path d="M1556.5 993.8L1563.3 1006.2H1549.7Z"/><path d="M1556.5 998.3V1002"/></g>
<circle cx="1556.5" cy="1004" r="0.6" fill="#888"/>
<g transform="translate(-140.8,-79.4) scale(1.08) translate(1760.2,992)" stroke="#fff" stroke-width="1.45"><g>
    <path d="M2.75 0.5Q3.2 2.15 4.85 2.6Q3.2 3.05 2.75 4.7Q2.3 3.05 0.65 2.6Q2.3 2.15 2.75 0.5Z"/>
    <path d="M10.9 1.7Q11.65 5.25 15.2 6Q11.65 6.75 10.9 10.3Q10.15 6.75 6.6 6Q10.15 5.25 10.9 1.7Z"/>
    <path d="M3.9 8Q4.5 10.7 7.2 11.3Q4.5 11.9 3.9 14.6Q3.3 11.9 0.6 11.3Q3.3 10.7 3.9 8Z"/>
  </g></g>
</svg>
</body></html>
